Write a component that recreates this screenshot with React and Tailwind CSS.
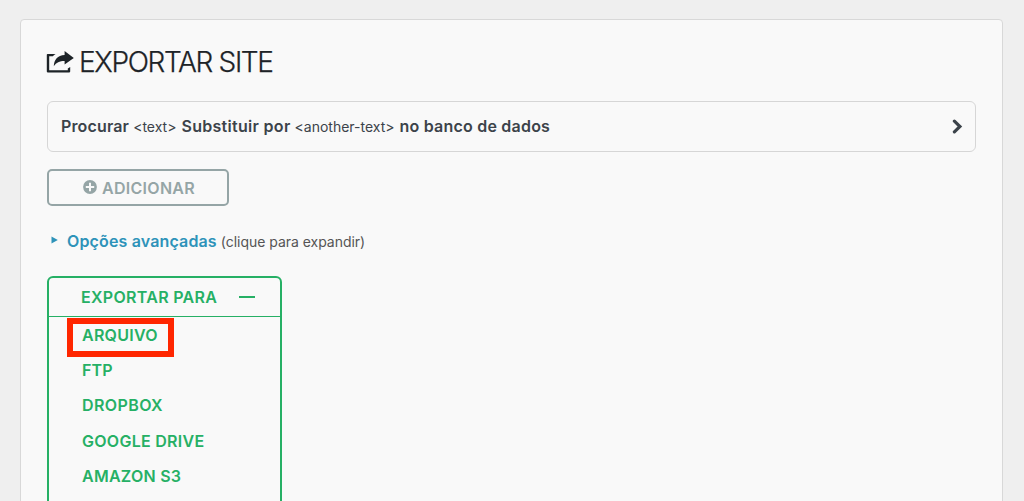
import React, { useState } from 'react';

const destinations = [
    { id: 'file', label: 'ARQUIVO', className: 'tracking-[0.25px]' },
    { id: 'ftp', label: 'FTP', className: 'tracking-[0.2px]' },
    { id: 'dropbox', label: 'DROPBOX', className: 'tracking-[0.4px]' },
    { id: 'gdrive', label: 'GOOGLE DRIVE', className: 'tracking-[0.28px]' },
    { id: 's3', label: 'AMAZON S3', className: 'tracking-[0.25px]' },
];

function ExportIcon() {
    return (
        <svg width="28" height="24" viewBox="0 0 28 24" className="mr-[5px] shrink-0" fill="currentColor">
            <path d="M9.6 4H1.6Q.8 4 .8 4.8V21.6Q.8 22.4 1.6 22.4H23.4Q24.2 22.4 24.2 21.6V17L21.8 18.6V20.2H3.2V6.2H6.8Q8 4.8 9.6 4Z" />
            <path d="M18.6 1L27.8 8L18.6 14.6V11C13.4 11 10.4 12.4 7.8 16.2C8 9.6 11.6 5.2 18.6 4.9Z" />
        </svg>
    );
}

function App() {
    const [open, setOpen] = useState(true);

    return (
        <div className="h-[501px] overflow-hidden bg-[#efefef] pt-[19px] pl-[20px] font-['Inter','Liberation_Sans',sans-serif]">
            <div className="h-[600px] w-[983px] rounded-[4px] border border-[#d8d8d8] bg-[#f9f9f9] pt-[22px] pl-[26px]">
                <h1 className="-ml-px flex h-[40px] items-center text-[28px] font-light tracking-[-1.35px] text-[#1d2327] whitespace-nowrap [-webkit-text-stroke:0.25px_#1d2327]">
                    <ExportIcon />
                    <span>EXPORTAR SITE</span>
                </h1>

                {/* Find and replace */}
                <div className="mt-[19px] flex h-[51px] w-[929px] items-center justify-between rounded-[6px] border border-[#d6d6d6] pr-[12px] pl-[13px] text-[#3c434a]">
                    <p className="mb-[2px] flex items-baseline gap-[5px] text-[16px] font-semibold whitespace-nowrap">
                        <span className="tracking-[0.15px]">Procurar</span>
                        <small className="-ml-px text-[14px] font-normal">&lt;text&gt;</small>
                        <span className="tracking-[0.3px]">Substituir por</span>
                        <small className="-ml-px text-[14px] font-normal">&lt;another-text&gt;</small>
                        <span className="tracking-[0.21px]">no banco de dados</span>
                    </p>
                    <svg width="11" height="15" viewBox="0 0 11 15" fill="none" stroke="currentColor" strokeWidth="3.2" strokeLinecap="round" strokeLinejoin="miter">
                        <path d="M2.4 2.2L7.9 7.5L2.4 12.8" />
                    </svg>
                </div>

                <button className="mt-[17px] flex h-[37px] w-[182px] items-center justify-center rounded-[5px] border-2 border-[#95a5a6] pl-[2px] text-[16px] font-semibold text-[#95a5a6] whitespace-nowrap">
                    <svg width="14" height="14" viewBox="0 0 14 14" className="mr-[5px] mb-[2px]">
                        <circle cx="7" cy="7" r="6.9" fill="currentColor" />
                        <path d="M7 2.8V11.2M2.8 7H11.2" stroke="#f9f9f9" strokeWidth="2" />
                    </svg>
                    <span className="tracking-[0.3px]">ADICIONAR</span>
                </button>

                <div className="mt-[23px] flex h-[24px] items-center pl-[4px] whitespace-nowrap">
                    <svg width="7" height="8" viewBox="0 0 7 8" className="mr-[9px] mb-[3px] fill-[#2e93b9]">
                        <path d="M.5.5L6.8 4L.5 7.5Z" />
                    </svg>
                    <p className="flex items-baseline gap-[4px]">
                        <span className="text-[16px] font-semibold tracking-[0.15px] text-[#2e93b9]">Opções avançadas</span>
                        <small className="text-[14px] tracking-[-0.03px] text-[#555]">(clique para expandir)</small>
                    </p>
                </div>

                {/* Export destinations */}
                <div className="mt-[23px] h-[300px] w-[235px] rounded-[6px] border-2 border-[#26b065] font-semibold text-[#26b065] whitespace-nowrap">
                    <button
                        className="flex h-[39px] w-full items-center border-b border-b-[#26b065] pl-[32px] text-[16px]"
                        onClick={() => setOpen(!open)}
                    >
                        <span className="tracking-[0.3px]">EXPORTAR PARA</span>
                        <span className="ml-[22px] h-[2px] w-[16px] bg-[#26b065]" />
                    </button>
                    {open && (
                        <ul className="relative text-[16px]">
                            {/* Highlight over the first destination */}
                            <li className="pointer-events-none absolute top-px left-[18px] h-[39px] w-[107px] border-[6px] border-[#ff2600]" />
                            {destinations.map((item) => (
                                <li key={item.id} className="flex h-[35.4px] items-center pl-[33px]">
                                    <span className={item.className}>{item.label}</span>
                                </li>
                            ))}
                        </ul>
                    )}
                </div>
            </div>
        </div>
    );
}

export default App;
